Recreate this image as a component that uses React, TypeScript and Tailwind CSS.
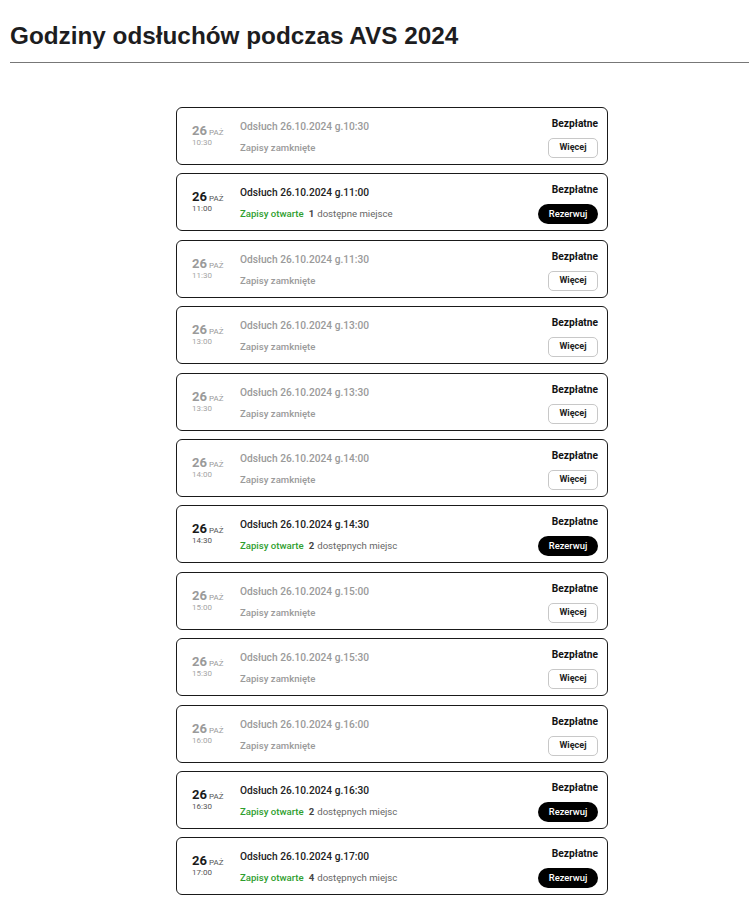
import { useState } from "react";

type Slot = {
  time: string;
  open: boolean;
  seats?: number;
};

const slots: Slot[] = [
  { time: "10:30", open: false },
  { time: "11:00", open: true, seats: 1 },
  { time: "11:30", open: false },
  { time: "13:00", open: false },
  { time: "13:30", open: false },
  { time: "14:00", open: false },
  { time: "14:30", open: true, seats: 2 },
  { time: "15:00", open: false },
  { time: "15:30", open: false },
  { time: "16:00", open: false },
  { time: "16:30", open: true, seats: 2 },
  { time: "17:00", open: true, seats: 4 },
];

function seatsLabel(count: number) {
  if (count === 1) {
    return "dostępne miejsce";
  }
  return "dostępnych miejsc";
}

export default function App() {
  const [selected, setSelected] = useState<string | null>(null);

  return (
    <div className="min-h-[900px] bg-white font-['Roboto',sans-serif] text-[#222]">
      <div className="pl-[10px]">
        <h1 className="pt-[21px] pb-[11px] font-['Liberation_Sans',Arial,sans-serif] text-[24.3px] font-bold leading-[30px] text-[#1d1d1f]">
          Godziny odsłuchów podczas AVS 2024
        </h1>
        <div className="h-px bg-[#777]" />
      </div>

      <div className="ml-[176px] mt-[44px] flex w-[432px] flex-col gap-[8.4px]">
        {slots.map((slot) => (
          <div
            key={slot.time}
            className={`flex h-[58px] items-stretch rounded-[6px] border border-[#1a1a1a] bg-white ${
              selected === slot.time ? "shadow-md" : ""
            }`}
          >
            <div className="w-[63px] shrink-0 pl-[15px] pt-[15px]">
              <div className="flex items-baseline gap-[2px]">
                <span
                  className={`text-[13px] font-bold leading-[15px] ${
                    slot.open ? "text-[#1a1a1a]" : "text-[#9a9a9a]"
                  }`}
                >
                  26
                </span>
                <span className={`text-[8px] leading-[10px] ${slot.open ? "text-[#555]" : "text-[#9a9a9a]"}`}>
                  PAŻ
                </span>
              </div>
              <div className={`text-[8px] leading-[10px] ${slot.open ? "text-[#555]" : "text-[#a5a5a5]"}`}>
                {slot.time}
              </div>
            </div>

            <div className="flex min-w-0 flex-1 flex-col pt-[12px]">
              <p
                className={`text-[10.2px] font-medium leading-[14px] ${
                  slot.open ? "text-[#222]" : "text-[#9a9a9a]"
                }`}
              >
                Odsłuch 26.10.2024 g.{slot.time}
              </p>
              <p className="mt-[7px] text-[9.6px] leading-[13px]">
                {slot.open ? (
                  <>
                    <span className="font-medium text-[#2e9e2e]">Zapisy otwarte</span>
                    <span className="ml-[5px] font-bold text-[#444]">{slot.seats}</span>
                    <span className="ml-[3px] text-[#666]">{seatsLabel(slot.seats ?? 0)}</span>
                  </>
                ) : (
                  <span className="font-medium text-[#9a9a9a]">Zapisy zamknięte</span>
                )}
              </p>
            </div>

            <div className="flex shrink-0 flex-col items-end pr-[9px] pt-[9px]">
              <p className="text-[10.2px] font-bold leading-[14px] text-[#111]">Bezpłatne</p>
              {slot.open ? (
                <button
                  type="button"
                  onClick={() => setSelected(slot.time)}
                  className="mt-[7px] flex h-[20px] w-[60px] items-center justify-center rounded-full bg-black text-[9.4px] font-medium text-white"
                >
                  Rezerwuj
                </button>
              ) : (
                <button
                  type="button"
                  onClick={() => setSelected(slot.time)}
                  className="mt-[7px] flex h-[20px] w-[50px] items-center justify-center rounded-[5px] border border-[#c8c8c8] bg-white text-[9px] font-bold text-[#222]"
                >
                  Więcej
                </button>
              )}
            </div>
          </div>
        ))}
      </div>
    </div>
  );
}
